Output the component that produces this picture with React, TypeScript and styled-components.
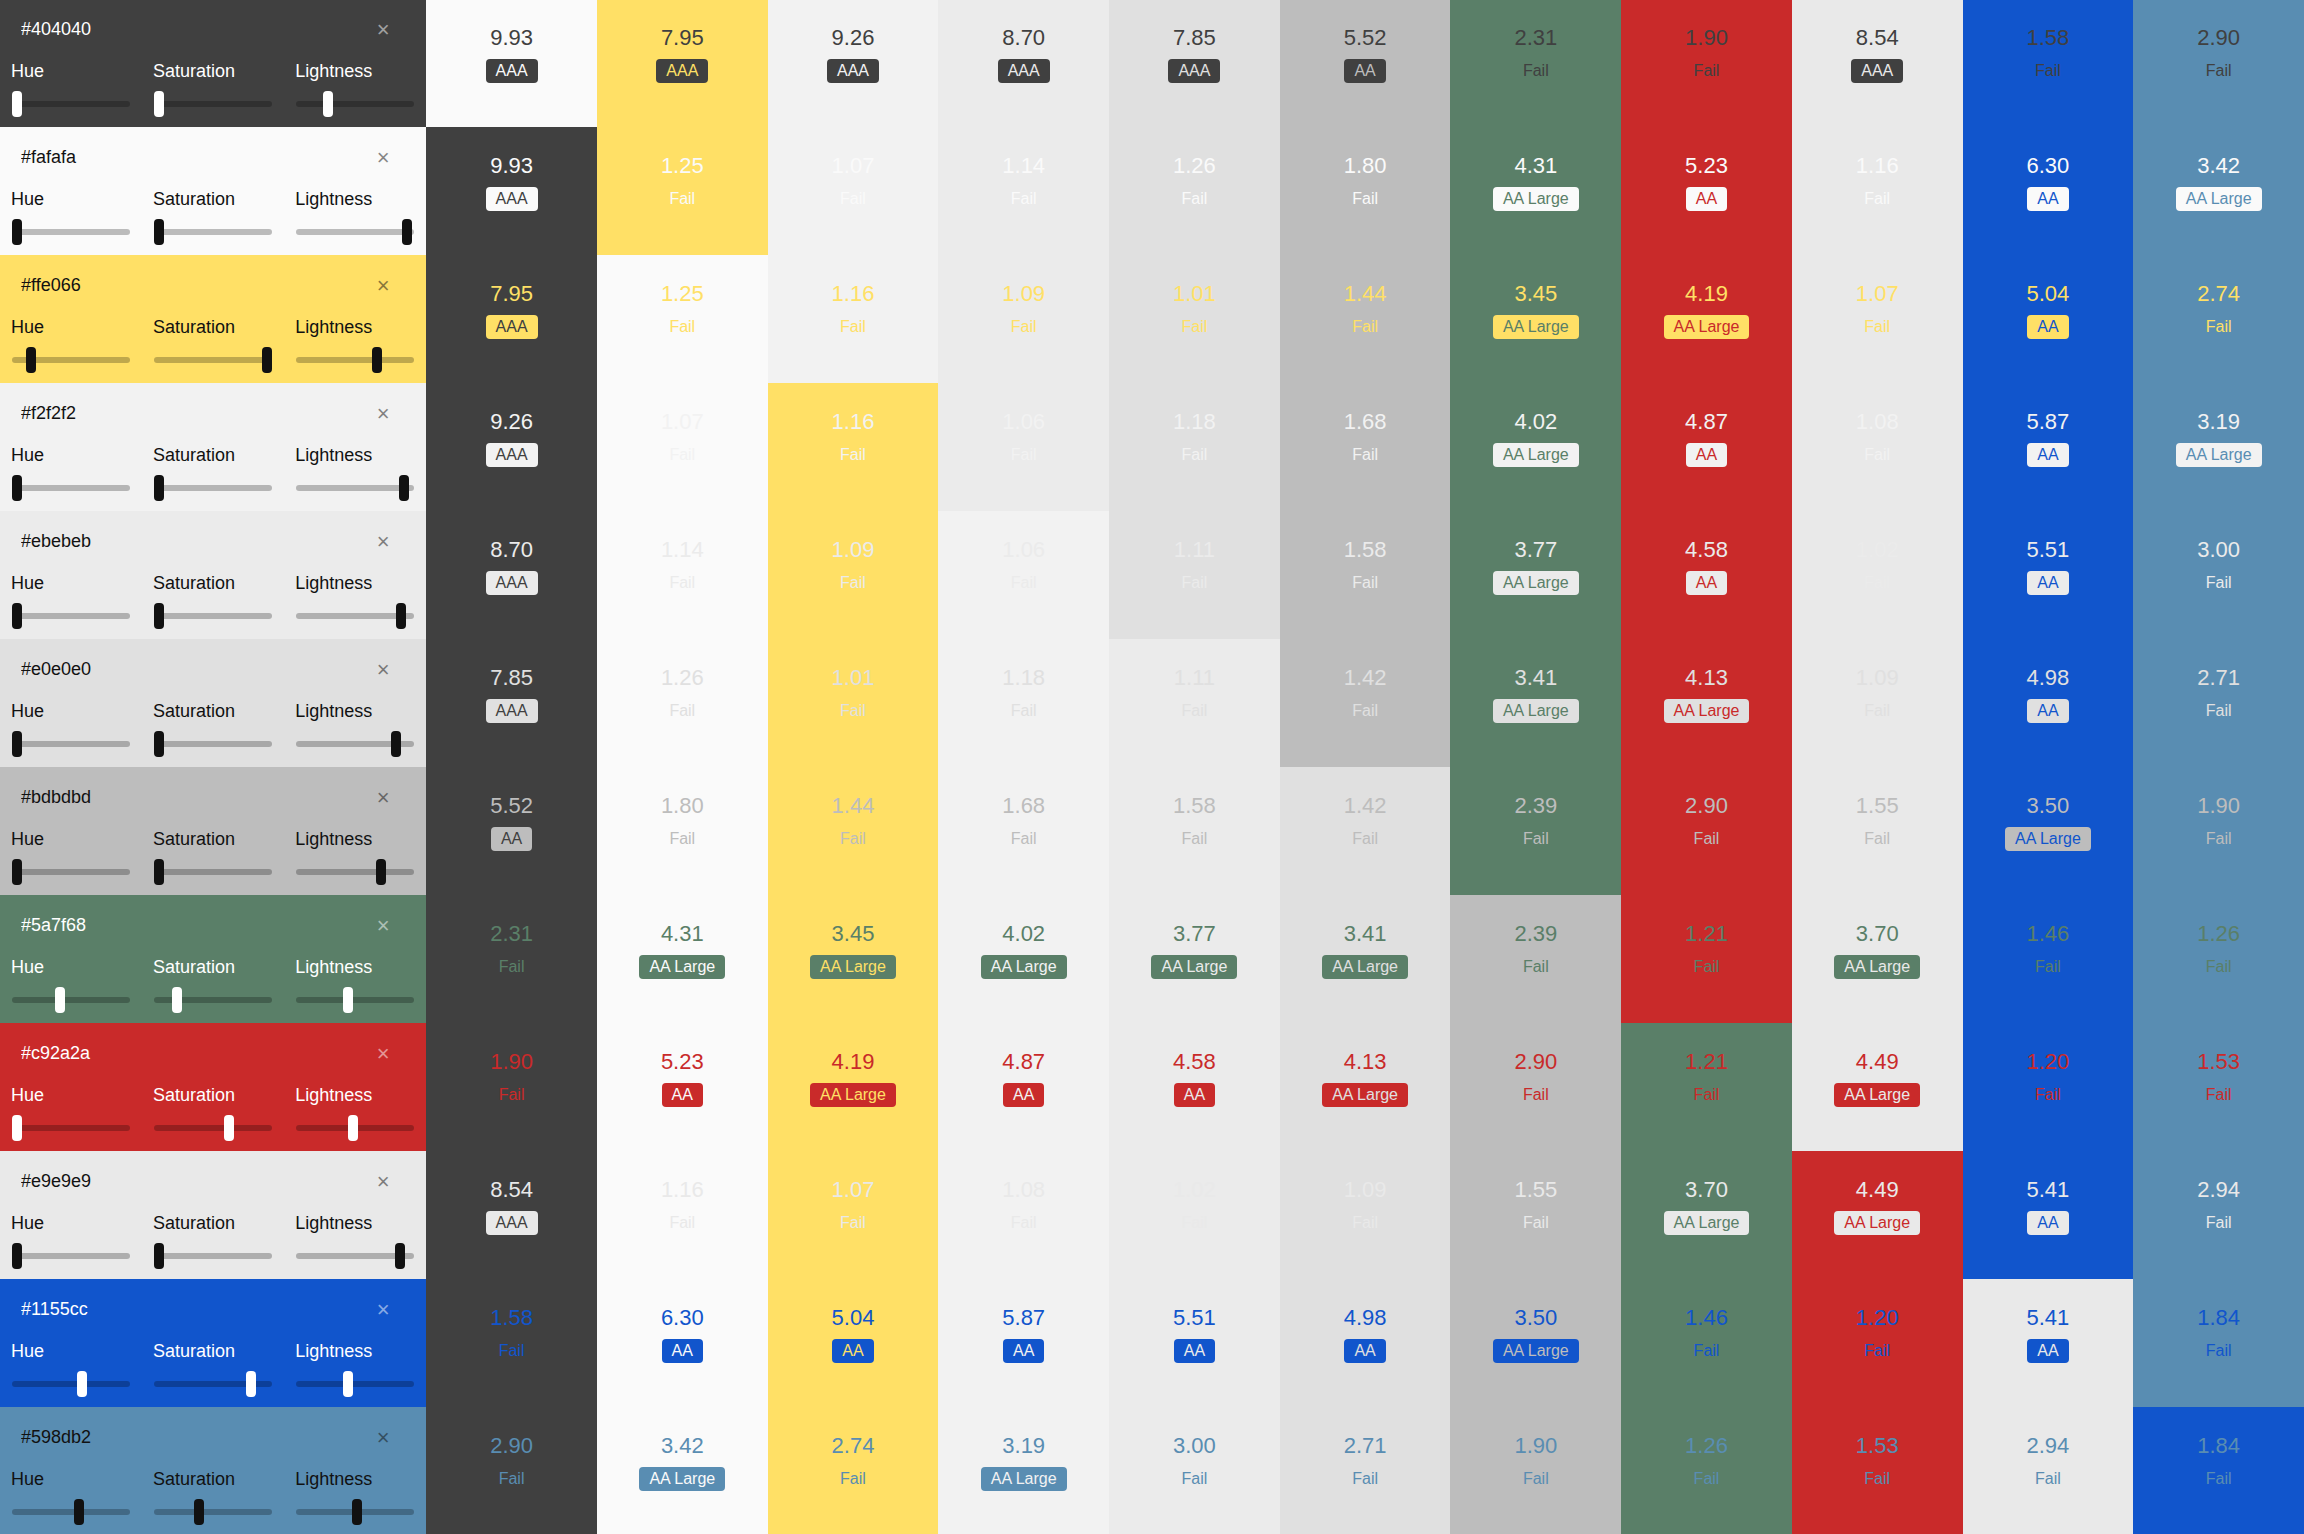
import React, { useId, useState } from 'react';
import styled, { createGlobalStyle } from 'styled-components';

const GlobalStyle = createGlobalStyle`
  *, *::before, *::after { box-sizing: border-box; }
  body {
    margin: 0;
    font-family: "Liberation Sans", Arial, Helvetica, sans-serif;
  }
`;

const initialColors = [
  '#404040', '#fafafa', '#ffe066', '#f2f2f2', '#ebebeb', '#e0e0e0',
  '#bdbdbd', '#5a7f68', '#c92a2a', '#e9e9e9', '#1155cc', '#598db2',
];

const channels = (hex: string) =>
  [1, 3, 5].map((i) => parseInt(hex.slice(i, i + 2), 16) / 255);

const luminance = (hex: string) => {
  const [r, g, b] = channels(hex).map((c) =>
    c <= 0.03928 ? c / 12.92 : Math.pow((c + 0.055) / 1.055, 2.4),
  );
  return 0.2126 * r + 0.7152 * g + 0.0722 * b;
};

const contrast = (a: string, b: string) => {
  const la = luminance(a);
  const lb = luminance(b);
  return (Math.max(la, lb) + 0.05) / (Math.min(la, lb) + 0.05);
};

const grade = (ratio: number) => {
  if (ratio >= 7) return 'AAA';
  if (ratio >= 4.5) return 'AA';
  if (ratio >= 3) return 'AA Large';
  return 'Fail';
};

const toHsl = (hex: string): [number, number, number] => {
  const [r, g, b] = channels(hex);
  const max = Math.max(r, g, b);
  const min = Math.min(r, g, b);
  const d = max - min;
  const l = (max + min) / 2;
  if (d === 0) return [0, 0, Math.round(l * 100)];
  const s = d / (1 - Math.abs(2 * l - 1));
  const h =
    max === r ? ((g - b) / d + 6) % 6 : max === g ? (b - r) / d + 2 : (r - g) / d + 4;
  return [Math.round(h * 60), Math.round(s * 100), Math.round(l * 100)];
};

const toHex = (h: number, s: number, l: number) => {
  const sat = s / 100;
  const lit = l / 100;
  const a = sat * Math.min(lit, 1 - lit);
  const part = (n: number) => {
    const k = (n + h / 30) % 12;
    const v = lit - a * Math.max(-1, Math.min(k - 3, 9 - k, 1));
    return Math.round(v * 255).toString(16).padStart(2, '0');
  };
  return `#${part(0)}${part(8)}${part(4)}`;
};

const Page = styled.main`
  height: 100vh;
  overflow: auto;
  scrollbar-width: none;
`;

const Matrix = styled.table`
  width: 100%;
  margin-top: -1px;
  border-collapse: collapse;
  table-layout: fixed;
`;

const PanelColumn = styled.col`
  width: 18.5%;
`;

const Panel = styled.th<{ $bg: string; $ink: string }>`
  height: 128px;
  padding: 0;
  vertical-align: top;
  text-align: left;
  font-weight: 400;
  background: ${(p) => p.$bg};
  color: ${(p) => p.$ink};
`;

const PanelHead = styled.div`
  display: flex;
  align-items: center;
  justify-content: space-between;
  height: 60px;
  padding: 0 31px 0 21px;
`;

const HexInput = styled.input`
  flex: 1;
  min-width: 0;
  padding: 0;
  border: 0;
  outline: 0;
  background: none;
  color: inherit;
  font: inherit;
  font-size: 18px;
`;

const RemoveButton = styled.button`
  width: 24px;
  height: 24px;
  margin-top: 2px;
  padding: 0;
  border: 0;
  background: none;
  color: inherit;
  font: inherit;
  font-size: 22px;
  line-height: 24px;
  opacity: 0.5;
  cursor: pointer;
`;

const Sliders = styled.div`
  display: grid;
  grid-template-columns: repeat(3, 1fr);
`;

const Field = styled.div`
  display: flex;
  flex-direction: column;
  padding: 0 12px;
`;

const FieldLabel = styled.label`
  margin-left: -1px;
  font-size: 18px;
  line-height: 24px;
`;

const Range = styled.input<{ $thumb: string }>`
  appearance: none;
  width: 100%;
  height: 26px;
  margin: 8px 0 0;
  background: none;
  cursor: pointer;

  &::-webkit-slider-runnable-track {
    height: 6px;
    border-radius: 3px;
    background: rgba(0, 0, 0, 0.25);
  }
  &::-webkit-slider-thumb {
    appearance: none;
    width: 10px;
    height: 26px;
    margin-top: -10px;
    border-radius: 4px;
    background: ${(p) => p.$thumb};
  }
`;

const Cell = styled.td<{ $fg: string; $bg: string }>`
  padding: 25px 0 0;
  vertical-align: top;
  text-align: center;
  color: ${(p) => p.$fg};
  background: ${(p) => p.$bg};
`;

const Ratio = styled.div`
  font-size: 22px;
  line-height: 28px;
`;

const Badge = styled.span<{ $fg: string; $bg: string }>`
  display: inline-block;
  margin-top: 7px;
  padding: 0 10px;
  border-radius: 4px;
  font-size: 16px;
  line-height: 24px;
  color: ${(p) => p.$fg};
  background: ${(p) => p.$bg};
`;

type SliderProps = {
  label: string;
  max: number;
  value: number;
  ink: string;
  onChange: (value: number) => void;
};

function Slider({ label, max, value, ink, onChange }: SliderProps) {
  const id = useId();
  return (
    <Field>
      <FieldLabel htmlFor={id}>{label}</FieldLabel>
      <Range
        id={id}
        type="range"
        min={0}
        max={max}
        value={value}
        $thumb={ink}
        onChange={(e) => onChange(Number(e.target.value))}
      />
    </Field>
  );
}

type ControlsProps = {
  color: string;
  onChange: (color: string) => void;
  onRemove: () => void;
};

function Controls({ color, onChange, onRemove }: ControlsProps) {
  const [draft, setDraft] = useState(color);
  const [h, s, l] = toHsl(color);
  const ink = contrast(color, '#111111') > contrast(color, '#ffffff') ? '#111111' : '#ffffff';
  const update = (next: string) => {
    setDraft(next);
    if (/^#[0-9a-f]{6}$/i.test(next)) onChange(next);
  };
  return (
    <Panel scope="row" $bg={color} $ink={ink}>
      <PanelHead>
        <HexInput
          aria-label="Color"
          value={draft}
          spellCheck={false}
          onChange={(e) => update(e.target.value)}
        />
        <RemoveButton type="button" aria-label="Remove color" onClick={onRemove}>
          ×
        </RemoveButton>
      </PanelHead>
      <Sliders>
        <Slider label="Hue" max={360} value={h} ink={ink} onChange={(v) => update(toHex(v, s, l))} />
        <Slider label="Saturation" max={100} value={s} ink={ink} onChange={(v) => update(toHex(h, v, l))} />
        <Slider label="Lightness" max={100} value={l} ink={ink} onChange={(v) => update(toHex(h, s, v))} />
      </Sliders>
    </Panel>
  );
}

function ContrastCell({ fg, bg }: { fg: string; bg: string }) {
  const ratio = contrast(fg, bg);
  const result = grade(ratio);
  const failed = result === 'Fail';
  return (
    <Cell $fg={fg} $bg={bg}>
      <Ratio>{ratio.toFixed(2)}</Ratio>
      <Badge $fg={failed ? fg : bg} $bg={failed ? 'transparent' : fg}>
        {result}
      </Badge>
    </Cell>
  );
}

export default function App() {
  const [colors, setColors] = useState(
    initialColors.map((value, id) => ({ id, value })),
  );
  return (
    <Page>
      <GlobalStyle />
      <Matrix>
        <colgroup>
          <PanelColumn />
          <col span={colors.length - 1} />
        </colgroup>
        <tbody>
          {colors.map((row) => (
            <tr key={row.id}>
              <Controls
                color={row.value}
                onChange={(value) =>
                  setColors((all) => all.map((c) => (c.id === row.id ? { ...c, value } : c)))
                }
                onRemove={() => setColors((all) => all.filter((c) => c.id !== row.id))}
              />
              {colors
                .filter((c) => c.id !== row.id)
                .map((c) => (
                  <ContrastCell key={c.id} fg={row.value} bg={c.value} />
                ))}
            </tr>
          ))}
        </tbody>
      </Matrix>
    </Page>
  );
}
